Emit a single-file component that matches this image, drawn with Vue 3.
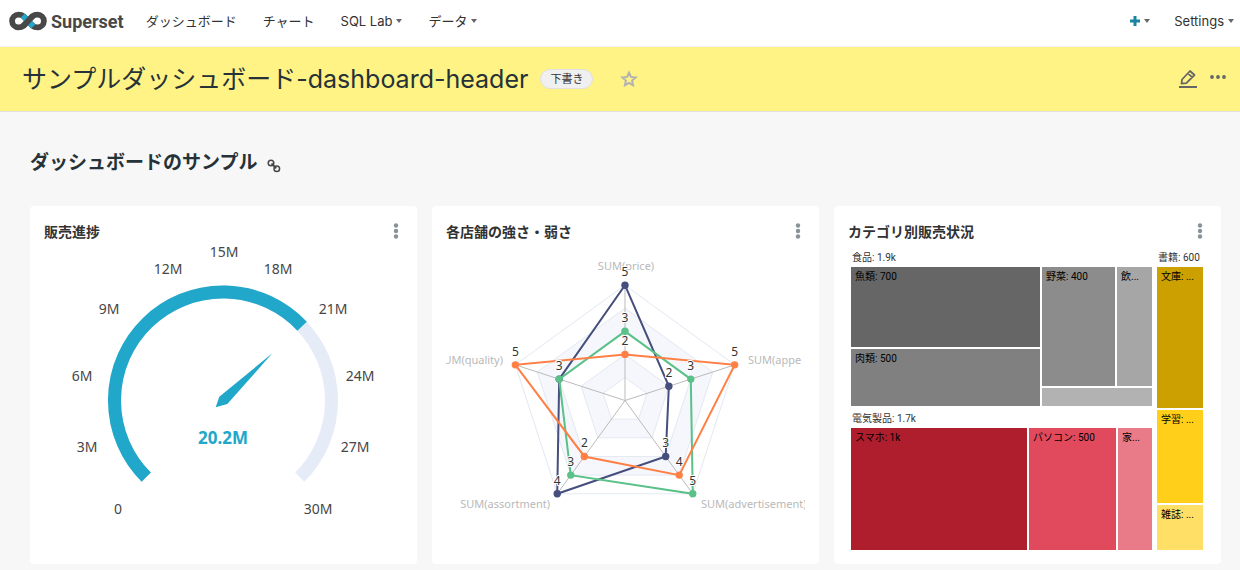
<template>
  <div class="page">
    <nav class="navbar">
      <a href="#" class="brand">
        <svg width="38" height="20" viewBox="0 0 38 20" aria-hidden="true">
          <g fill="none" stroke-width="5.800">
            <path
              d="M19 10L14.500 5.200C13 3.900 11.500 3.600 9.500 3.600a6.400 6.400 0 0 0 0 12.800C11.500 16.400 13 16.100 14.500 14.800L23.500 5.200C25 3.900 26.500 3.600 28.500 3.600a6.400 6.400 0 0 1 0 12.800C26.500 16.400 25 16.100 23.500 14.800Z"
              stroke="#484848"
            />
            <path d="M13.800 4.500L24.200 15.500" stroke="#20a7c9" />
            <path d="M13.800 15.500L24.200 4.500" stroke="#484848" />
          </g>
        </svg>
        <span>Superset</span>
      </a>
      <a href="#" class="nav-item">ダッシュボード</a>
      <a href="#" class="nav-item">チャート</a>
      <button class="nav-item">SQL Lab<i class="caret"></i></button>
      <button class="nav-item">データ<i class="caret"></i></button>
      <div class="nav-right">
        <button class="nav-item" aria-label="New">
          <svg width="10" height="10" viewBox="0 0 10 10">
            <path d="M5 0V10M0 5H10" stroke="#1985a0" stroke-width="3" />
          </svg>
          <i class="caret"></i>
        </button>
        <button class="nav-item">Settings<i class="caret"></i></button>
      </div>
    </nav>

    <header class="dashboard-header">
      <h1>サンプルダッシュボード-dashboard-header</h1>
      <span class="badge">下書き</span>
      <button class="icon-btn star" aria-label="Favorite">
        <svg width="18" height="18" viewBox="0 0 18 18">
          <path
            d="M9 2.600L10.900 6.900L15.700 7.400L12.100 10.600L13.100 15.200L9 12.800L4.900 15.200L5.900 10.600L2.300 7.400L7.100 6.900Z"
            fill="none"
            stroke="#b2b2b2"
            stroke-width="2"
          />
        </svg>
      </button>
      <div class="header-actions">
        <button class="icon-btn" aria-label="Edit dashboard">
          <svg width="18" height="20" viewBox="0 0 18 20">
            <path
              d="M2.500 14.500L3 10.500L11 2L15.500 6L7.300 14.200ZM9 4.300L13.300 8.300"
              fill="none"
              stroke="#666"
              stroke-width="1.800"
              stroke-linejoin="round"
            />
            <path d="M0 18H18" stroke="#666" stroke-width="2" />
          </svg>
        </button>
        <button class="icon-btn" aria-label="More">
          <svg width="18" height="20" viewBox="0 0 18 20" fill="#666">
            <circle cx="3" cy="8" r="1.900" />
            <circle cx="9" cy="8" r="1.900" />
            <circle cx="15" cy="8" r="1.900" />
          </svg>
        </button>
      </div>
    </header>

    <main>
      <h2>
        ダッシュボードのサンプル
        <a href="#" aria-label="Anchor link">
          <svg width="14" height="14" viewBox="0 0 14 14" fill="none" stroke="#484848">
            <circle cx="4" cy="4" r="2.800" stroke-width="1.500" />
            <circle cx="9.800" cy="9.800" r="2.800" stroke-width="1.500" />
            <path d="M4.500 4.500L9.300 9.300" stroke-width="1.800" />
          </svg>
        </a>
      </h2>

      <div class="grid">
        <section v-for="card in cards" :key="card.id" class="card">
          <div class="card-header">
            <h3>{{ card.title }}</h3>
            <button class="icon-btn" aria-label="Chart options">
              <svg width="6" height="18" viewBox="0 0 6 18" fill="#879399">
                <circle cx="3" cy="2.500" r="2.200" />
                <circle cx="3" cy="8" r="2.200" />
                <circle cx="3" cy="13.500" r="2.200" />
              </svg>
            </button>
          </div>

          <svg v-if="card.id === 'gauge'" class="chart" viewBox="0 0 359 308">
            <path :d="arc(-225, 45)" class="track" />
            <path :d="arc(-225, -43.2)" class="progress" />
            <path d="M228.300 111.300L183.300 162L171.700 165.300L175.300 154.700Z" fill="#20a7c9" />
            <text v-for="t in ticks" :key="t.text" :x="t.x" :y="t.y" class="tick">
              {{ t.text }}
            </text>
            <text x="179" y="202" class="gauge-value">20.2M</text>
          </svg>

          <svg v-else-if="card.id === 'radar'" class="chart" viewBox="0 0 359 308">
            <polygon
              v-for="n in [5, 4, 3, 2, 1]"
              :key="n"
              :points="polygon(Array(5).fill(n / 5))"
              :fill="n % 2 ? '#fff' : '#f5f7fc'"
              stroke="#e3e8f2"
            />
            <line
              v-for="(p, i) in spokes"
              :key="i"
              :x1="CX"
              :y1="CY"
              :x2="p.x"
              :y2="p.y"
              stroke="#bbb"
            />
            <text
              v-for="a in axes"
              :key="a.text"
              :x="a.x"
              :y="a.y"
              :text-anchor="a.anchor"
              class="axis-name"
            >
              {{ a.text }}
            </text>
            <g v-for="s in series" :key="s.color">
              <polygon :points="polygon(s.ratio)" fill="none" :stroke="s.color" stroke-width="2" />
              <circle
                v-for="(r, i) in s.ratio"
                :key="i"
                :cx="point(i, r).x"
                :cy="point(i, r).y"
                r="3.700"
                :fill="s.color"
              />
            </g>
            <g v-for="s in series" :key="s.color">
              <text
                v-for="(r, i) in s.ratio"
                :key="i"
                :x="point(i, r).x"
                :y="point(i, r).y - 9"
                class="point-label"
              >
                {{ s.values[i] }}
              </text>
            </g>
          </svg>

          <div v-else class="treemap">
            <div class="column" :style="{ flexGrow: 301 }">
              <div class="group-label">食品: 1.9k</div>
              <div class="row" :style="{ flexGrow: 139 }">
                <div class="column gap" :style="{ flexGrow: 189 }">
                  <div class="cell" :style="cell(80, '#666666')">魚類: 700</div>
                  <div class="cell" :style="cell(57, '#808080')">肉類: 500</div>
                </div>
                <div class="column gap" :style="{ flexGrow: 110 }">
                  <div class="row" :style="{ flexGrow: 119 }">
                    <div class="cell" :style="cell(73, '#8c8c8c')">野菜: 400</div>
                    <div class="cell" :style="cell(35, '#a6a6a6')">飲...</div>
                  </div>
                  <div class="cell" :style="cell(18, '#b2b2b2')"></div>
                </div>
              </div>
              <div class="group-label">電気製品: 1.7k</div>
              <div class="row" :style="{ flexGrow: 122 }">
                <div class="cell" :style="cell(176, '#af1e2d')">スマホ: 1k</div>
                <div class="cell" :style="cell(87, '#e04a5c')">パソコン: 500</div>
                <div class="cell" :style="cell(34, '#e97b88')">家...</div>
              </div>
            </div>
            <div class="column" :style="{ flexGrow: 46 }">
              <div class="group-label">書籍: 600</div>
              <div class="column gap" :style="{ flexGrow: 1 }">
                <div class="cell" :style="cell(141, '#cca000')">文庫: ...</div>
                <div class="cell" :style="cell(94, '#ffcf1a')">学習: ...</div>
                <div class="cell" :style="cell(45, '#ffdf66')">雑誌: ...</div>
              </div>
            </div>
          </div>
        </section>
      </div>
    </main>
  </div>
</template>

<script setup>
const CX = 179;
const CY = 158.5;
const RADIUS = 115.3;

const cards = [
  { id: "gauge", title: "販売進捗" },
  { id: "radar", title: "各店舗の強さ・弱さ" },
  { id: "treemap", title: "カテゴリ別販売状況" },
];

const ticks = [
  { text: "0", x: 74, y: 272 },
  { text: "3M", x: 43, y: 210 },
  { text: "6M", x: 38, y: 139 },
  { text: "9M", x: 65, y: 72 },
  { text: "12M", x: 124, y: 32 },
  { text: "15M", x: 180, y: 15 },
  { text: "18M", x: 234, y: 32 },
  { text: "21M", x: 289, y: 72 },
  { text: "24M", x: 316, y: 139 },
  { text: "27M", x: 311, y: 210 },
  { text: "30M", x: 274, y: 272 },
];

const axes = [
  { text: "SUM(price)", x: 180, y: 28, anchor: "middle" },
  { text: "SUM(appe", x: 302, y: 122, anchor: "start" },
  { text: "SUM(advertisement)", x: 255, y: 266, anchor: "start" },
  { text: "SUM(assortment)", x: 104, y: 266, anchor: "end" },
  { text: "SUM(quality)", x: 57, y: 122, anchor: "end" },
];

const series = [
  { color: "#454e7c", ratio: [1, 0.4, 0.6, 1, 0.6], values: [5, 2, 3, 4, 3] },
  { color: "#5ac189", ratio: [0.6, 0.6, 1, 0.8, 0.6], values: [3, 3, 5, 3, 3] },
  { color: "#ff7f44", ratio: [0.4, 1, 0.8, 0.6, 1], values: [2, 5, 4, 2, 5] },
];

// axes run clockwise, starting at the top
function point(i, ratio) {
  const a = ((i * 72 - 90) * Math.PI) / 180;
  return {
    x: CX + RADIUS * ratio * Math.cos(a),
    y: CY + RADIUS * ratio * Math.sin(a),
  };
}

function polygon(ratios) {
  return ratios
    .map((r, i) => {
      const p = point(i, r);
      return `${p.x},${p.y}`;
    })
    .join(" ");
}

const spokes = [0, 1, 2, 3, 4].map((i) => point(i, 1));

function arc(from, to) {
  const r = 108.5;
  const at = (deg) => {
    const a = (deg * Math.PI) / 180;
    return `${CX + r * Math.cos(a)} ${CY + r * Math.sin(a)}`;
  };
  return `M${at(from)}A${r} ${r} 0 ${to - from > 180 ? 1 : 0} 1 ${at(to)}`;
}

function cell(size, color) {
  return { flexGrow: size, backgroundColor: color };
}
</script>

<style>
body {
  margin: 0;
  background: #f7f7f7;
}
</style>

<style scoped>
.page {
  font-family: Inter, "Noto Sans CJK JP", sans-serif;
  color: #323232;
}

a {
  color: inherit;
  text-decoration: none;
}
button {
  padding: 0;
  border: none;
  background: none;
  color: inherit;
  font: inherit;
  cursor: pointer;
}
h1,
h2,
h3 {
  margin: 0;
}

.navbar {
  display: flex;
  align-items: center;
  height: 47px;
  padding: 0 6px 4px 9px;
  box-sizing: border-box;
  gap: 26px;
  background: #fff;
  border-bottom: 1px solid #f0f0f0;
}
.brand {
  display: flex;
  align-items: center;
  gap: 4px;
  margin-right: -4px;
  color: #484848;
  font-family: Roboto, sans-serif;
  font-size: 18px;
  font-weight: 700;
}
.nav-item {
  display: flex;
  align-items: center;
  font-size: 13px;
  line-height: 20px;
  white-space: nowrap;
}
.caret {
  margin-left: 4px;
  border: 3px solid transparent;
  border-top: 4px solid #666;
  border-bottom: none;
}
.nav-right {
  display: flex;
  gap: 24px;
  margin-left: auto;
}

.dashboard-header {
  display: flex;
  align-items: center;
  height: 65px;
  padding: 0 13px 0 22px;
  box-sizing: border-box;
  background: #fff386;
  border-bottom: 1px solid #e0e0e0;
}
h1 {
  font-size: 25px;
  font-weight: 400;
  line-height: 32px;
  color: #263238;
  white-space: nowrap;
}
.badge {
  margin-left: 12px;
  padding: 0 9px;
  border: 1px solid #e0e0e0;
  border-radius: 10px;
  background: #f0f0f0;
  font-size: 11px;
  line-height: 18px;
}
.icon-btn {
  display: flex;
}
.star {
  margin-left: 27px;
}
.header-actions {
  display: flex;
  gap: 12px;
  margin-left: auto;
}

main {
  padding: 37px 19px 6px 30px;
}
h2 {
  display: flex;
  align-items: center;
  gap: 10px;
  margin-bottom: 29px;
  font-size: 19px;
  font-weight: 700;
  line-height: 28px;
  color: #263238;
}
h2 a {
  display: flex;
  padding-top: 6px;
}

.grid {
  display: grid;
  grid-template-columns: repeat(3, 1fr);
  gap: 15px;
}
.card {
  min-width: 0;
  padding: 16px 14px 14px;
  border-radius: 4px;
  background: #fff;
}
.card-header {
  display: flex;
  align-items: center;
  justify-content: space-between;
  height: 20px;
  padding-right: 4px;
}
h3 {
  font-size: 14px;
  font-weight: 700;
  line-height: 20px;
}

.chart {
  display: block;
  width: 100%;
  overflow: hidden;
  font-family: "Noto Sans", sans-serif;
}
.track,
.progress {
  fill: none;
  stroke: #e6ebf8;
  stroke-width: 13px;
}
.progress {
  stroke: #20a7c9;
}
.tick {
  font-size: 14px;
  fill: #464646;
  text-anchor: middle;
}
.gauge-value {
  font-size: 17px;
  font-weight: 700;
  fill: #20a7c9;
  text-anchor: middle;
}
.axis-name {
  font-size: 11px;
  fill: #b9b9b9;
}
.point-label {
  font-size: 12px;
  fill: #333;
  stroke: #fff;
  stroke-width: 2px;
  paint-order: stroke;
  text-anchor: middle;
}

.treemap {
  display: flex;
  gap: 5px;
  height: 308px;
  padding: 3px 4px 0 3px;
  box-sizing: border-box;
  font-family: Roboto, "Noto Sans CJK JP", sans-serif;
  font-size: 10px;
  color: #000;
}
.column,
.row {
  display: flex;
  flex: 0 1 0;
  min-width: 0;
  min-height: 0;
}
.column {
  flex-direction: column;
}
.row,
.gap {
  gap: 2px;
}
.group-label {
  flex: none;
  height: 22px;
  padding-left: 1px;
  line-height: 25px;
  color: #333;
  white-space: nowrap;
}
.cell {
  flex: 0 1 0;
  min-width: 0;
  min-height: 0;
  overflow: hidden;
  text-indent: 4px;
  line-height: 20px;
  white-space: nowrap;
}
</style>
